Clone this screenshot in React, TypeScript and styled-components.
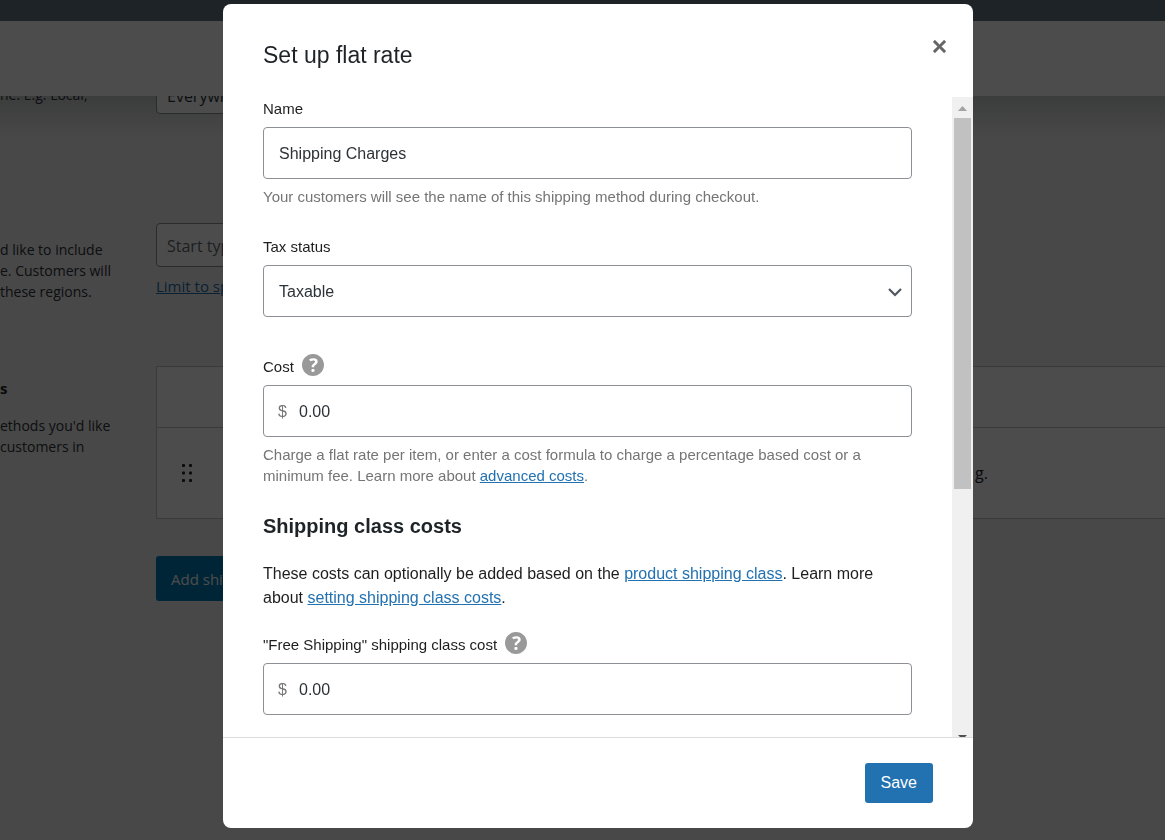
import React from "react";
import styled, { createGlobalStyle } from "styled-components";

const GlobalStyle = createGlobalStyle`
  *, *::before, *::after { box-sizing: border-box; }
  html, body { margin: 0; height: 100%; background: #f0f0f1; }
  #root { height: 100%; }
  h1, h2, h3, p { margin: 0; }
`;

const uiFont = `"Liberation Sans", Arial, sans-serif`;
const adminFont = `"Open Sans", "Noto Sans", sans-serif`;

/* ---------- settings page behind the dialog ---------- */

const Page = styled.div`
  display: flex;
  flex-direction: column;
  height: 100vh;
  overflow: hidden;
  background: #f0f0f1;
  color: #2c3338;
  font: 14px/21px ${adminFont};
`;

const AdminBar = styled.div`
  flex: none;
  height: 21px;
  background: #1d2327;
  position: relative;
  z-index: 2;
`;

const PageHeader = styled.header`
  flex: none;
  height: 75px;
  background: #fff;
`;

const Settings = styled.main`
  flex: 1;
  min-height: 0;
  overflow: hidden;
  display: grid;
  grid-template-columns: 156px 1fr;
  grid-template-rows: 127px 143px 1fr;
  background: linear-gradient(#c8cacc, #f0f0f1 40px);
`;

const Hint = styled.div<{ $top: number }>`
  padding-top: ${(p) => p.$top}px;
  white-space: nowrap;
`;

const ZoneHint = styled(Hint)`
  margin-top: -12px;
`;

const HintTitle = styled.h3`
  font-size: 15px;
  line-height: 21px;
  margin-bottom: 16px;
  color: #1d2327;
`;

const PageField = styled.input`
  display: block;
  width: 100%;
  max-width: 400px;
  height: 44px;
  padding: 2px 10px 0;
  border: 1px solid #8c8f94;
  border-radius: 4px;
  background: #fff;
  color: #2c3338;
  font: 16px ${adminFont};
  &::placeholder {
    color: #646970;
    opacity: 1;
  }
`;

const ZoneField = styled(PageField)`
  margin-top: -26px;
  padding-top: 8px;
`;

const PageLink = styled.a`
  display: inline-block;
  margin-top: 9px;
  color: #2271b1;
  font-size: 15px;
`;

const Methods = styled.div`
  border: 1px solid #c3c4c7;
  border-right: 0;
  background: #fff;
`;

const MethodsHead = styled.div`
  height: 61px;
  border-bottom: 1px solid #c3c4c7;
`;

const MethodRow = styled.div`
  height: 90px;
  display: flex;
  align-items: center;
  justify-content: space-between;
  padding: 0 177px 0 24px;
  font-size: 16px;
  color: #1d2327;
`;

const AddButton = styled.button`
  margin-top: 37px;
  height: 45px;
  padding: 0 15px;
  border: 0;
  border-radius: 3px;
  background: #007cba;
  color: #fff;
  font: 15px ${adminFont};
`;

/* ---------- dialog ---------- */

const Backdrop = styled.div`
  position: fixed;
  inset: 0;
  z-index: 1;
  background: rgba(0, 0, 0, 0.7);
`;

const DialogLayer = styled.div`
  position: fixed;
  inset: 0;
  z-index: 3;
  display: flex;
  justify-content: center;
  padding: 4px 0 12px 31px;
`;

const Dialog = styled.section`
  width: 100%;
  max-width: 750px;
  display: flex;
  flex-direction: column;
  overflow: hidden;
  border-radius: 8px;
  background: #fff;
  color: #1e1e1e;
  font: 16px/24px ${uiFont};
`;

const DialogHeader = styled.header`
  flex: none;
  display: flex;
  justify-content: space-between;
  align-items: flex-start;
  padding: 35px 26px 26px 40px;
`;

const Title = styled.h1`
  font-size: 23px;
  line-height: 32px;
  font-weight: 400;
  color: #1d2327;
`;

const CloseButton = styled.button`
  display: flex;
  padding: 1px;
  border: 0;
  background: none;
  color: #666;
`;

const DialogBody = styled.div`
  flex: 1;
  min-height: 0;
  display: flex;
`;

const Form = styled.form`
  flex: 1;
  min-width: 0;
  overflow: hidden;
  padding: 0 40px;
`;

const Field = styled.div<{ $gap?: number }>`
  margin-bottom: ${(p) => p.$gap ?? 28}px;
`;

const LabelRow = styled.div`
  display: flex;
  align-items: center;
  gap: 8px;
  height: 23px;
  margin-bottom: 7px;
  font-size: 15px;
`;

const HelpIcon = styled.svg`
  display: block;
  margin-bottom: 4px;
  width: 22px;
  height: 22px;
  fill: #999;
`;

const Control = styled.div`
  display: flex;
  align-items: center;
  height: 52px;
  border: 1px solid #8c8f94;
  border-radius: 4px;
  background: #fff;
`;

const Prefix = styled.span`
  width: 20px;
  margin-left: 14px;
  margin-right: -14px;
  padding-top: 2px;
  color: #757575;
`;

const controlText = `
  flex: 1;
  min-width: 0;
  width: 100%;
  height: 100%;
  padding: 0 15px;
  border: 0;
  outline: 0;
  background: transparent;
  color: #2c3338;
  font: 16px ${uiFont};
`;

const TextInput = styled.input`
  ${controlText}
  padding-top: 2px;
`;

const SelectBox = styled(Control)`
  display: grid;
  grid-template: 100% / 1fr;
  > * {
    grid-area: 1 / 1;
  }
`;

const Select = styled.select`
  ${controlText}
  appearance: none;
`;

const Chevron = styled.svg`
  justify-self: end;
  align-self: center;
  margin: 2px 8px 0 0;
  pointer-events: none;
`;

const Help = styled.p`
  margin-top: 7px;
  font-size: 15px;
  line-height: 21px;
  color: #757575;
`;

const Link = styled.a`
  color: #2271b1;
`;

const SectionTitle = styled.h2`
  font-size: 20px;
  line-height: 24px;
  color: #1d2327;
`;

const Intro = styled.p`
  margin: 24px 0 23px;
`;

const Scrollbar = styled.div`
  flex: none;
  width: 21px;
  padding: 0 2px;
  overflow: hidden;
  display: flex;
  flex-direction: column;
  align-items: center;
  background: #f0f0f0;
`;

const ScrollArrow = styled.svg`
  flex: none;
  display: block;
`;

const ScrollThumb = styled.div`
  flex: none;
  width: 100%;
  height: 58%;
  margin-bottom: auto;
  background: #c1c1c1;
`;

const DialogFooter = styled.footer`
  flex: none;
  display: flex;
  justify-content: flex-end;
  padding: 25px 40px;
  border-top: 1px solid #dcdcde;
`;

const SaveButton = styled.button`
  height: 40px;
  padding: 0 16px;
  border: 0;
  border-radius: 3px;
  background: #2271b1;
  color: #fff;
  font: 16px ${uiFont};
`;

function HelpTip() {
  return (
    <HelpIcon viewBox="3 3 14 14" role="img" aria-label="Help">
      <path d="M17 10c0-3.87-3.14-7-7-7-3.87 0-7 3.13-7 7s3.13 7 7 7c3.86 0 7-3.13 7-7zm-6.3 1.48H9.14v-.43c0-.38.08-.7.24-.98s.46-.57.88-.89c.41-.29.68-.53.81-.71.14-.18.2-.39.2-.62 0-.25-.09-.44-.28-.58-.19-.13-.45-.19-.79-.19-.58 0-1.25.19-2 .57l-.64-1.28c.87-.49 1.8-.74 2.77-.74.81 0 1.45.2 1.92.58.48.39.71.91.71 1.55 0 .43-.09.8-.29 1.11-.19.32-.57.67-1.11 1.06-.38.28-.61.49-.71.63-.1.15-.15.34-.15.57v.35zm-1.47 2.74c-.18-.17-.27-.42-.27-.73 0-.33.08-.58.26-.75s.43-.25.77-.25c.32 0 .57.09.75.26s.27.42.27.74c0 .3-.09.55-.27.72-.18.18-.43.27-.75.27-.33 0-.58-.09-.76-.26z" />
    </HelpIcon>
  );
}

function DragHandle() {
  return (
    <svg width="12" height="20" viewBox="0 0 12 20" fill="currentColor" aria-hidden="true">
      {[1, 8.5, 16].map((y) => (
        <React.Fragment key={y}>
          <rect x="1" y={y} width="3" height="3" rx="1" />
          <rect x="8" y={y} width="3" height="3" rx="1" />
        </React.Fragment>
      ))}
    </svg>
  );
}

function SettingsPage() {
  return (
    <Page>
      <AdminBar />
      <PageHeader />
      <Settings>
        <ZoneHint $top={0}>ne. E.g. Local,</ZoneHint>
        <div>
          <ZoneField aria-label="Zone name" defaultValue="Everywh" />
        </div>
        <Hint $top={16}>
          d like to include
          <br />
          e. Customers will
          <br />
          these regions.
        </Hint>
        <div>
          <PageField aria-label="Zone regions" placeholder="Start typ" />
          <PageLink href="#">Limit to sp</PageLink>
        </div>
        <Hint $top={12}>
          <HintTitle>s</HintTitle>
          ethods you'd like
          <br />
          customers in
        </Hint>
        <div>
          <Methods>
            <MethodsHead />
            <MethodRow>
              <DragHandle />
              <span>g.</span>
            </MethodRow>
          </Methods>
          <AddButton type="button">Add ship</AddButton>
        </div>
      </Settings>
    </Page>
  );
}

export default function App() {
  return (
    <>
      <GlobalStyle />
      <SettingsPage />
      <Backdrop />
      <DialogLayer>
        <Dialog role="dialog" aria-modal="true" aria-labelledby="dialog-title">
          <DialogHeader>
            <Title id="dialog-title">Set up flat rate</Title>
            <CloseButton type="button" aria-label="Close">
              <svg width="13" height="13" viewBox="5 5 10 10" fill="currentColor" stroke="currentColor" strokeWidth="0.3">
                <path d="M14.95 6.46L11.41 10l3.54 3.54-1.41 1.41L10 11.42l-3.53 3.53-1.42-1.42L8.58 10 5.05 6.47l1.42-1.42L10 8.58l3.54-3.53z" />
              </svg>
            </CloseButton>
          </DialogHeader>

          <DialogBody>
            <Form id="rate-form">
              <Field>
                <LabelRow>
                  <label htmlFor="name">Name</label>
                </LabelRow>
                <Control>
                  <TextInput id="name" defaultValue="Shipping Charges" />
                </Control>
                <Help>Your customers will see the name of this shipping method during checkout.</Help>
              </Field>

              <Field $gap={38}>
                <LabelRow>
                  <label htmlFor="tax">Tax status</label>
                </LabelRow>
                <SelectBox>
                  <Select id="tax" defaultValue="taxable">
                    <option value="taxable">Taxable</option>
                  </Select>
                  <Chevron width="16" height="16" viewBox="0 0 16 16" fill="none" stroke="#50575e" strokeWidth="2.2">
                    <path d="M2 5l6 6 6-6" />
                  </Chevron>
                </SelectBox>
              </Field>

              <Field>
                <LabelRow>
                  <label htmlFor="cost">Cost</label>
                  <HelpTip />
                </LabelRow>
                <Control>
                  <Prefix>$</Prefix>
                  <TextInput id="cost" defaultValue="0.00" />
                </Control>
                <Help>
                  Charge a flat rate per item, or enter a cost formula to charge a percentage based cost or a minimum
                  fee. Learn more about <Link href="#">advanced costs</Link>.
                </Help>
              </Field>

              <SectionTitle>Shipping class costs</SectionTitle>
              <Intro>
                These costs can optionally be added based on the <Link href="#">product shipping class</Link>. Learn
                more about <Link href="#">setting shipping class costs</Link>.
              </Intro>

              <Field>
                <LabelRow>
                  <label htmlFor="class-cost">"Free Shipping" shipping class cost</label>
                  <HelpTip />
                </LabelRow>
                <Control>
                  <Prefix>$</Prefix>
                  <TextInput id="class-cost" defaultValue="0.00" />
                </Control>
              </Field>
            </Form>

            <Scrollbar aria-hidden="true">
              <ScrollArrow width="17" height="21" viewBox="0 0 17 21">
                <path d="M4 14l4.5-5 4.5 5z" fill="#a3a3a3" />
              </ScrollArrow>
              <ScrollThumb />
              <ScrollArrow width="17" height="2" viewBox="0 0 17 2">
                <path d="M4 0h9l-2 2H6z" fill="#505050" />
              </ScrollArrow>
            </Scrollbar>
          </DialogBody>

          <DialogFooter>
            <SaveButton type="submit" form="rate-form">
              Save
            </SaveButton>
          </DialogFooter>
        </Dialog>
      </DialogLayer>
    </>
  );
}
